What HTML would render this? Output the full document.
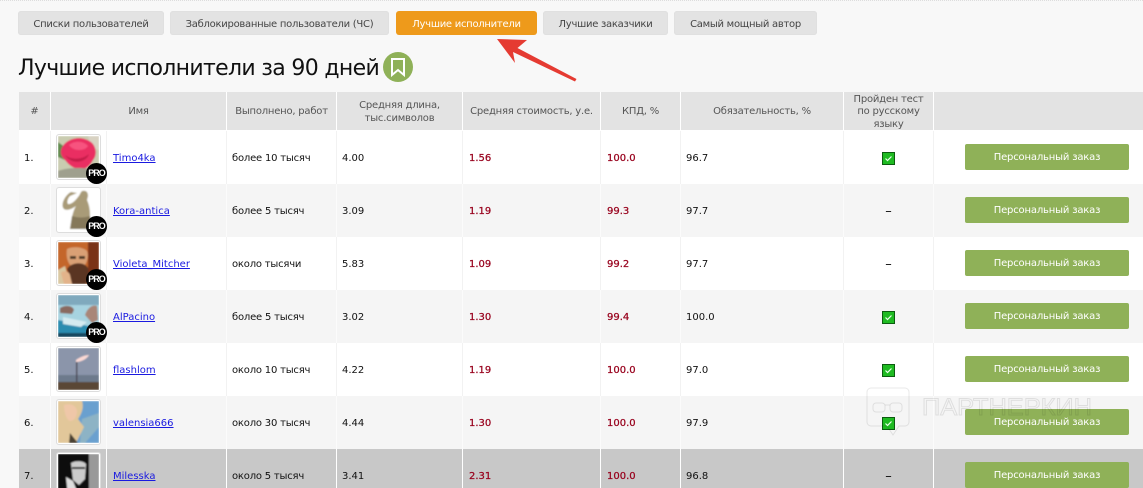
<!DOCTYPE html>
<html lang="ru"><head><meta charset="utf-8"><title>Лучшие исполнители</title>
<style>
html,body{margin:0;padding:0;width:1143px;height:488px;overflow:hidden;background:#f8f8f8}
body{position:relative;font-family:"DejaVu Sans","Liberation Sans",sans-serif;font-size:10px;color:#111}
.dots{position:absolute;left:0;top:0;width:1143px;height:0;border-top:1px dotted #ddd}
.tab{position:absolute;top:11px;height:24px;line-height:27px;background:#e3e3e3;border-radius:3px;text-align:center;color:#444;white-space:nowrap;box-shadow:inset 0 0 0 1px #e0e0e0;letter-spacing:-.27px}
.tab.on{background:#ee9a1b;color:#fff;box-shadow:none}
h1{position:absolute;left:18px;top:52px;margin:0;font-weight:normal;font-size:22px;line-height:34px;color:#111;font-family:"DejaVu Sans",sans-serif;white-space:nowrap;letter-spacing:-.68px}
table{position:absolute;left:19px;top:92px;width:1124px;border-collapse:separate;border-spacing:0;table-layout:fixed}
th{box-sizing:border-box;height:38px;padding:0;background:#e3e3e3;font-weight:normal;color:#555;border-right:1px solid #fff;line-height:12.5px;text-align:center;letter-spacing:-.22px}
th div{position:relative;top:1.5px}
td{box-sizing:border-box;height:53px;padding:2px 0 0;border-right:1px solid #f2f2f2;background:#fff;white-space:nowrap;position:relative}
tr.h td{height:1px;padding:0;background:#fff;border:0}
tr.e td{background:#f5f5f5;border-right-color:#fbfbfb}
tr.g td{background:#c8c8c8;border-right-color:#fff}
td.n{padding-left:5px}
td.t{padding-left:5px;letter-spacing:-.2px}
td.x{padding-left:5px}
td.r{color:#98001c;padding-left:6px;-webkit-text-stroke:.25px #98001c}
td.u{padding-left:6px}
td.c{text-align:center}
a{color:#1a1ae0;text-decoration:underline}
.av{position:absolute;left:5px;top:3px;width:41px;height:42px;padding:1px;background:#fff;border:1px solid #ddd;border-radius:3px}
.av svg{display:block;width:41px;height:42px}
.pro{position:absolute;left:35px;top:32px;width:21px;height:21px;border-radius:50%;background:#000;color:#fff;font:bold 9px/21px "Liberation Sans",sans-serif;text-align:center;letter-spacing:-1px}
.btn{display:block;position:absolute;left:31px;top:13px;width:164px;height:26px;line-height:28px;border-radius:2px;background:#8fb158;color:#fff;text-align:center;letter-spacing:-.17px}
.ck{display:inline-block;width:11px;height:11px;background:#1fbb22;border:1px solid #0c5c10;vertical-align:middle}
.ck svg{display:block;width:11px;height:11px}
.d{font-size:13px;color:#111}
svg.ov{position:absolute;left:0;top:0;pointer-events:none}
</style></head><body>
<div class="dots"></div>
<div class="tab" style="left:18px;width:146px">Списки пользователей</div>
<div class="tab" style="left:170px;width:219px">Заблокированные пользователи (ЧС)</div>
<div class="tab on" style="left:396px;width:141px">Лучшие исполнители</div>
<div class="tab" style="left:543px;width:125px">Лучшие заказчики</div>
<div class="tab" style="left:674px;width:143px">Самый мощный автор</div>
<h1>Лучшие исполнители за 90 дней</h1>
<table>
<colgroup><col style="width:32px"><col style="width:56px"><col style="width:120px"><col style="width:110px"><col style="width:126px"><col style="width:138px"><col style="width:80px"><col style="width:163px"><col style="width:90px"><col></colgroup>
<tr><th><div>#</div></th><th colspan="2"><div>Имя</div></th><th><div>Выполнено, работ</div></th><th><div>Средняя длина,<br>тыс.символов</div></th><th><div>Средняя стоимость, у.е.</div></th><th><div>КПД, %</div></th><th><div>Обязательность, %</div></th><th><div>Пройден тест<br>по русскому<br>языку</div></th><th style="border:0"></th></tr>
<tr class="h"><td colspan="10"></td></tr>

<tr><td class="n">1.</td><td><div class="av"><svg viewBox="0 0 41 42"><defs><filter id="b" x="-10%" y="-10%" width="120%" height="120%"><feGaussianBlur stdDeviation=".9"/></filter></defs><g filter="url(#b)"><rect width="41" height="42" fill="#c9ccb0"/><path d="M30 0h11v14l-8-2z" fill="#d8d2c2"/><path d="M0 6l8 6-1 12-7-3z" fill="#5f8a4e"/><path d="M3 14C6 3 22-2 33 6c6 5 6 14 2 18-3 6-8 10-13 9-7 0-12-5-15-9-3-3-5-6-4-10z" fill="#ea2f62"/><path d="M11 9c6-5 15-4 19 1-3 5-14 6-19-1z" fill="#f7527f"/><path d="M7 19c6 5 17 5 24-1-2 8-17 12-24 1z" fill="#c41a48"/><path d="M0 35c10-4 30-4 41 0v7H0z" fill="#9fa08e"/></g></svg></div><div class="pro">PRO</div></td><td class="u"><a href="#">Timo4ka</a></td><td class="t">более 10 тысяч</td><td class="x">4.00</td><td class="r">1.56</td><td class="r">100.0</td><td class="x">96.7</td><td class="c"><span class="ck"><svg viewBox="0 0 11 11"><path d="M2.5 5.5l2 2 4-4" fill="none" stroke="#eaffea" stroke-width="1.2"/></svg></span></td><td style="border:0"><span class="btn">Персональный заказ</span></td></tr>

<tr class="e"><td class="n">2.</td><td><div class="av"><svg viewBox="0 0 41 42"><g filter="url(#b)"><rect width="41" height="42" fill="#fff"/><path d="M24 2c4-1 6 1 6 5l-1 4c3 7 3 12 3 17l2 12H12l2-12c1-4 2-8 4-11-4 3-9 5-12 3-4-4 1-14 7-17l6 1-7 3c-3 3-3 7-2 8 3 1 8-4 10-7 2-2 2-4 4-6z" fill="#a99b78"/><path d="M14 27c6 2 12 2 18 0l2 13H12z" fill="#85785a"/></g></svg></div><div class="pro">PRO</div></td><td class="u"><a href="#">Kora-antica</a></td><td class="t">более 5 тысяч</td><td class="x">3.09</td><td class="r">1.19</td><td class="r">99.3</td><td class="x">97.7</td><td class="c"><span class="d">–</span></td><td style="border:0"><span class="btn">Персональный заказ</span></td></tr>

<tr><td class="n">3.</td><td><div class="av"><svg viewBox="0 0 41 42"><g filter="url(#b)"><rect width="41" height="42" fill="#c4662a"/><path d="M30 0h11v42H30z" fill="#7a3218"/><path d="M0 28l7-4 5 18H0z" fill="#d9c7a0"/><path d="M9 7c6-3 16-2 20 2 2 5 0 12-3 15H13C9 20 8 13 9 7z" fill="#d9a074"/><path d="M12 14h6v3h-6zM21 14h6v3h-6z" fill="#4f3a2c"/><path d="M9 27c4-7 17-8 21-1 1 6 1 10-2 16H14z" fill="#5a3424"/><path d="M3 31c2-3 8-2 9 2l2 9H6z" fill="#e2b38a"/></g></svg></div><div class="pro">PRO</div></td><td class="u"><a href="#">Violeta_Mitcher</a></td><td class="t">около тысячи</td><td class="x">5.83</td><td class="r">1.09</td><td class="r">99.2</td><td class="x">97.7</td><td class="c"><span class="d">–</span></td><td style="border:0"><span class="btn">Персональный заказ</span></td></tr>

<tr class="e"><td class="n">4.</td><td><div class="av"><svg viewBox="0 0 41 42"><g filter="url(#b)"><rect width="41" height="42" fill="#a7d3e0"/><rect width="41" height="10" fill="#7fa9bd"/><path d="M2 13c6-4 13-2 14 2l-2 4-12-1z" fill="#8a6a60"/><path d="M27 20c2-7 8-11 12-9l1 14-6 3z" fill="#a98678"/><path d="M0 25l30 6 11-3v14H0z" fill="#2b8cb0"/><path d="M5 22l24 5-6 5-18-3z" fill="#d4eaf0"/><rect y="38" width="41" height="4" fill="#12465f"/></g></svg></div><div class="pro">PRO</div></td><td class="u"><a href="#">AlPacino</a></td><td class="t">более 5 тысяч</td><td class="x">3.02</td><td class="r">1.30</td><td class="r">99.4</td><td class="x">100.0</td><td class="c"><span class="ck"><svg viewBox="0 0 11 11"><path d="M2.5 5.5l2 2 4-4" fill="none" stroke="#eaffea" stroke-width="1.2"/></svg></span></td><td style="border:0"><span class="btn">Персональный заказ</span></td></tr>

<tr><td class="n">5.</td><td><div class="av"><svg viewBox="0 0 41 42"><g filter="url(#b)"><rect width="41" height="42" fill="#8b95aa"/><rect y="27" width="41" height="7" fill="#6d7a8c"/><rect y="34" width="41" height="8" fill="#5a4634"/><path d="M18 12c4-3 9-5 13-5-2 4-8 7-13 7z" fill="#fbd9d4"/><rect x="18" y="14" width="1.4" height="20" fill="#4a4450"/></g></svg></div></td><td class="u"><a href="#">flashlom</a></td><td class="t">около 10 тысяч</td><td class="x">4.22</td><td class="r">1.19</td><td class="r">100.0</td><td class="x">97.0</td><td class="c"><span class="ck"><svg viewBox="0 0 11 11"><path d="M2.5 5.5l2 2 4-4" fill="none" stroke="#eaffea" stroke-width="1.2"/></svg></span></td><td style="border:0"><span class="btn">Персональный заказ</span></td></tr>

<tr class="e"><td class="n">6.</td><td><div class="av"><svg viewBox="0 0 41 42"><g filter="url(#b)"><rect width="41" height="42" fill="#6aa0cf"/><path d="M24 18l17-6v14l-14 16H22z" fill="#8db3c5"/><path d="M0 0h24c2 6 0 12-4 18l6 8-8 16H0z" fill="#e2c79a"/><path d="M6 4c6-2 12 0 13 6 0 6-3 10-7 10-4-1-6-10-6-16z" fill="#efc7a8"/><path d="M12 32l8 10h-9z" fill="#4a4030"/></g></svg></div></td><td class="u"><a href="#">valensia666</a></td><td class="t">около 30 тысяч</td><td class="x">4.44</td><td class="r">1.30</td><td class="r">100.0</td><td class="x">97.9</td><td class="c"><span class="ck"><svg viewBox="0 0 11 11"><path d="M2.5 5.5l2 2 4-4" fill="none" stroke="#eaffea" stroke-width="1.2"/></svg></span></td><td style="border:0"><span class="btn">Персональный заказ</span></td></tr>

<tr class="g"><td class="n">7.</td><td><div class="av"><svg viewBox="0 0 41 42"><g filter="url(#b)"><rect width="41" height="42" fill="#111"/><rect x="31" width="10" height="42" fill="#999"/><path d="M13 9c5-3 13-2 15 1l-1 15-6 6-6-5z" fill="#ccc"/><path d="M8 23l7 4 6 15H10z" fill="#ddd"/><rect x="14" y="13" width="13" height="2" fill="#222"/></g></svg></div></td><td class="u"><a href="#">Milesska</a></td><td class="t">около 5 тысяч</td><td class="x">3.41</td><td class="r">2.31</td><td class="r">100.0</td><td class="x">96.8</td><td class="c"><span class="d">–</span></td><td style="border:0"><span class="btn">Персональный заказ</span></td></tr>
</table>

<svg class="ov" width="1143" height="488" viewBox="0 0 1143 488">
<circle cx="398" cy="67" r="15" fill="#8fb158"/>
<path d="M392 59h12v16l-6-5-6 5z" fill="none" stroke="#fff" stroke-width="2"/>
<path d="M497 39L527 40 517.5 48 576.5 79 575 81.5 513 52 515 63z" fill="#e53b32"/>
<g fill="none" stroke="#000" stroke-opacity=".09" stroke-width="1">
<path d="M871 388h34a4 4 0 0 1 4 4v30a4 4 0 0 1-4 4h-6l-6 9-6-9h-16a4 4 0 0 1-4-4v-30a4 4 0 0 1 4-4z"/>
<rect x="873" y="403" width="12" height="9" rx="3"/><rect x="890" y="403" width="12" height="9" rx="3"/><path d="M885 405h5"/>
<text x="922" y="415" font-family="Liberation Sans,sans-serif" font-size="24" textLength="170" lengthAdjust="spacingAndGlyphs">ПАРТНЕРКИН</text>
</g>
</svg>
</body></html>
